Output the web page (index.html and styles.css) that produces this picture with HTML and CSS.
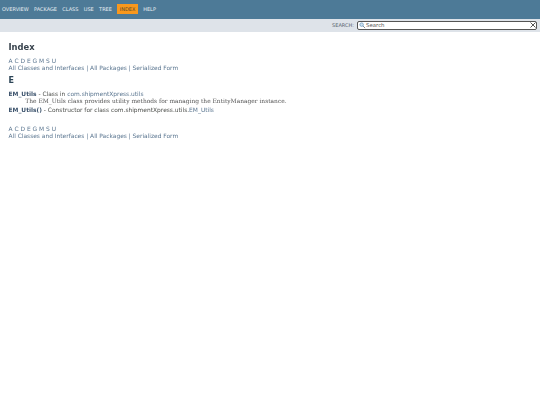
FILE: index.html
```html
<!DOCTYPE html>
<html lang="en">
<head>
<meta charset="utf-8">
<title>Index</title>
<link rel="stylesheet" href="styles.css">
</head>
<body>
<header>
  <nav class="topnav">
    <a href="#">OVERVIEW</a><a href="#">PACKAGE</a><a href="#">CLASS</a><a href="#">USE</a><a href="#">TREE</a><span class="current">INDEX</span><a href="#">HELP</a>
  </nav>
  <div class="subnav">
    <label class="search-label" for="s">SEARCH:</label>
    <div class="search">
      <svg class="glass" viewBox="0 0 8 8" width="7" height="7"><circle cx="3" cy="3" r="2" fill="#cfe3f2" stroke="#6d9cc0" stroke-width="0.9"/><path d="M4.6 4.6 7 7" stroke="#7d8c99" stroke-width="1.1"/></svg>
      <span class="placeholder">Search</span>
      <svg class="clear" viewBox="0 0 6 6" width="6" height="6"><path d="M.5.5 5.5 5.5M5.5.5.5 5.5" stroke="#555" stroke-width="1"/></svg>
    </div>
  </div>
</header>
<main>
  <h1>Index</h1>
  <div class="links">
    <div class="letters"><a href="#">A</a> <a href="#">C</a> <a href="#">D</a> <a href="#">E</a> <a href="#">G</a> <a href="#">M</a> <a href="#">S</a> <a href="#">U</a></div>
    <div><a href="#">All Classes and Interfaces</a> | <a href="#">All Packages</a> | <a href="#">Serialized Form</a></div>
  </div>
  <h2>E</h2>
  <dl>
    <dt><a class="strong" href="#">EM_Utils</a> - Class in <a href="#">com.shipmentXpress.utils</a></dt>
    <dd>The EM_Utils class provides utility methods for managing the EntityManager instance.</dd>
    <dt class="second"><a class="strong" href="#">EM_Utils()</a> - Constructor for class com.shipmentXpress.utils.<a href="#">EM_Utils</a></dt>
  </dl>
  <div class="links bottom">
    <div class="letters"><a href="#">A</a> <a href="#">C</a> <a href="#">D</a> <a href="#">E</a> <a href="#">G</a> <a href="#">M</a> <a href="#">S</a> <a href="#">U</a></div>
    <div><a href="#">All Classes and Interfaces</a> | <a href="#">All Packages</a> | <a href="#">Serialized Form</a></div>
  </div>
</main>
</body>
</html>
```
FILE: styles.css
```css
* { box-sizing: border-box; }
html, body { margin: 0; padding: 0; }
body {
  width: 540px;
  height: 405px;
  background: #fff;
  color: #4c4e4a;
  font-family: "DejaVu Sans", sans-serif;
  font-size: 5.92px;
  overflow: hidden;
  filter: blur(0.3px);
}
a { color: #4a6782; text-decoration: none; }
.topnav {
  display: flex;
  align-items: center;
  height: 18.5px;
  padding-left: 2px;
  background: #4d7a97;
  font-size: 5px;
}
.topnav a, .topnav .current { color: #e8eef3; margin-right: 5.3px; }
.topnav .current {
  background: #f8981d;
  color: #5a4a2a;
  padding: 2px 2.5px;
}
.subnav {
  display: flex;
  align-items: center;
  justify-content: flex-end;
  height: 13.5px;
  background: #dee3e9;
  padding-right: 3px;
}
.search-label { font-size: 5px; color: #5a6570; margin-right: 3px; }
.search {
  display: flex;
  align-items: center;
  width: 180px;
  height: 8.5px;
  background: #fff;
  border: 1px solid #555;
  border-radius: 2px;
  padding: 0 0 0 1px;
}
.glass { flex: none; }
.placeholder { flex: 1; font-size: 5.4px; color: #555; }
.clear { flex: none; }
main { padding: 9.5px 8.5px 0; }
h1 { margin: 0 0 5.5px; font-size: 8.4px; line-height: 11px; color: #39444e; font-weight: bold; }
.links { line-height: 7px; }
.links, .links a { color: #5b7690; }
h2 { margin: 4px 0 4.5px; font-size: 8px; line-height: 10px; color: #2c4557; font-weight: bold; }
dl { margin: 0; }
dt { line-height: 7px; }
dt a { color: #5b7690; }
dt.second { margin-top: 2px; }
dd {
  margin: 0 0 0 16.8px;
  font-family: "DejaVu Serif", serif;
  font-size: 5.92px;
  line-height: 7px;
  color: #555;
}
dt a.strong { font-weight: bold; color: #39506a; }
.bottom { margin-top: 12px; }
```
